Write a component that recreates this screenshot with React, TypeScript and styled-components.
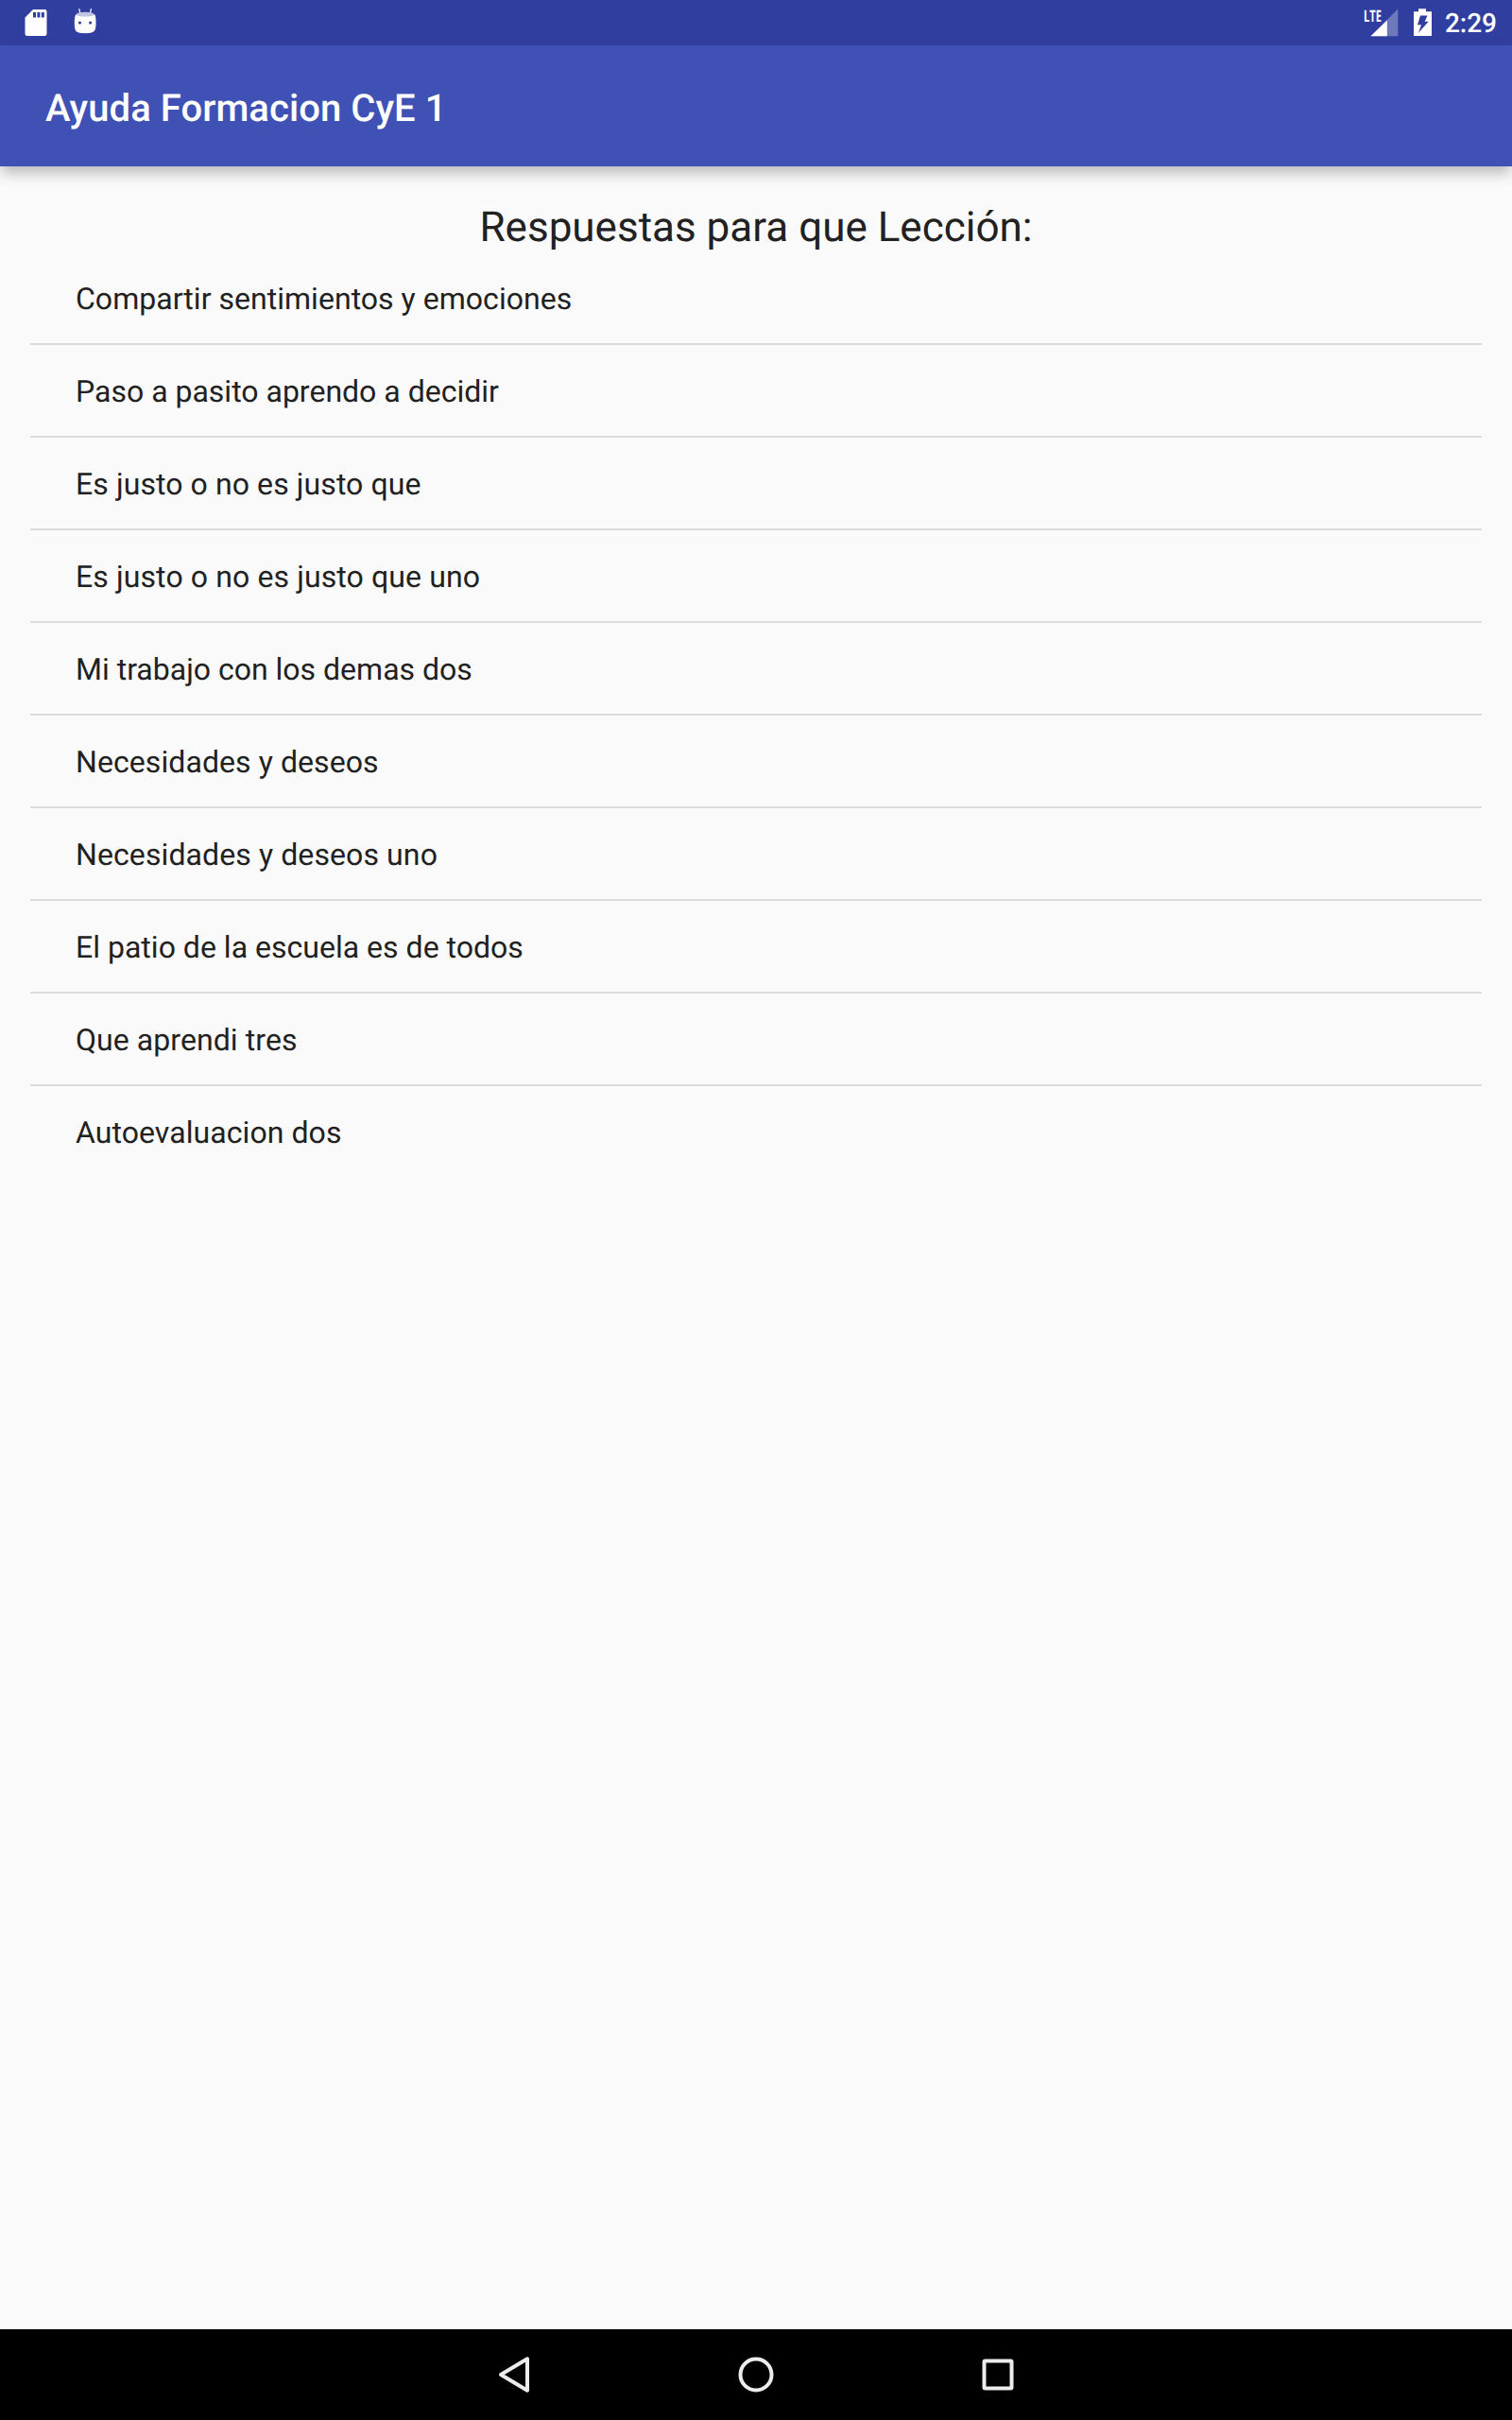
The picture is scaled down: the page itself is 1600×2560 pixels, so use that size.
import React from "react";
import styled, { createGlobalStyle } from "styled-components";

const GlobalStyle = createGlobalStyle`
  * { box-sizing: border-box; }
  body {
    margin: 0;
    background: #fafafa;
    font-family: Roboto, "Noto Sans", sans-serif;
    text-rendering: geometricPrecision;
  }
`;

const Screen = styled.div`
  display: flex;
  flex-direction: column;
  width: 1600px;
  height: 2560px;
  background: #fafafa;
  color: #212121;
  overflow: hidden;
`;

const StatusBar = styled.header`
  display: flex;
  justify-content: space-between;
  height: 48px;
  flex: none;
  background: #303f9f;
  color: #fff;
  padding: 0 16px 0 22px;
`;

const StatusGroup = styled.div<{ $gap: number }>`
  display: flex;
  align-items: center;
  gap: ${(p) => p.$gap}px;
`;

const Clock = styled.span`
  font-size: 28px;
  font-weight: 500;
  line-height: 48px;
  padding-top: 2px;
`;

const Toolbar = styled.div`
  display: flex;
  align-items: center;
  height: 128px;
  flex: none;
  padding: 5px 0 0 48px;
  background: #3f51b5;
  color: #fff;
  box-shadow: 0 8px 14px -1px rgba(0, 0, 0, 0.26);
`;

const Title = styled.h1`
  margin: 0;
  font-size: 40px;
  font-weight: 500;
  line-height: 48px;
  letter-spacing: 0.06px;
`;

const Content = styled.main`
  flex: 1;
  padding: 32px 32px 0;
`;

const Heading = styled.h2`
  margin: 0;
  height: 59px;
  font-size: 44px;
  font-weight: 400;
  line-height: 65px;
  text-align: center;
`;

const List = styled.ul`
  margin: 0;
  padding: 0;
  list-style: none;
`;

const Item = styled.li<{ $tracking: number }>`
  height: 98px;
  padding-left: 48px;
  border-bottom: 2px solid #dcdcdc;
  font-size: 32px;
  line-height: 98px;
  letter-spacing: ${(p) => p.$tracking}px;
  &:last-child { border-bottom: 0; }
`;

const NavBar = styled.nav`
  display: flex;
  justify-content: center;
  align-items: center;
  height: 96px;
  flex: none;
  background: #000;
`;

const NavButton = styled.button`
  display: flex;
  justify-content: center;
  align-items: center;
  width: 256px;
  height: 96px;
  padding: 0;
  border: 0;
  background: none;
`;

const lessons = [
  { name: "Compartir sentimientos y emociones", tracking: 0.03 },
  { name: "Paso a pasito aprendo a decidir", tracking: 0 },
  { name: "Es justo o no es justo que", tracking: 0.09 },
  { name: "Es justo o no es justo que uno", tracking: 0.11 },
  { name: "Mi trabajo con los demas dos", tracking: 0 },
  { name: "Necesidades y deseos", tracking: 0.08 },
  { name: "Necesidades y deseos uno", tracking: 0.1 },
  { name: "El patio de la escuela es de todos", tracking: 0.015 },
  { name: "Que aprendi tres", tracking: 0.07 },
  { name: "Autoevaluacion dos", tracking: 0.07 },
];

const SdCard = () => (
  <svg width="32" height="48" viewBox="22 0 32 48">
    <path fillRule="evenodd" fill="#fff" d="M35 10h12.2a2.3 2.3 0 0 1 2.3 2.3v23.4a2.3 2.3 0 0 1-2.3 2.3H28.8a2.3 2.3 0 0 1-2.3-2.3V18.5zM35 13v5.5h3V13zm4.4 0v5.5h3V13zm4.4 0v5.5h3V13z" />
  </svg>
);

const Droid = () => (
  <svg width="32" height="48" viewBox="74 0 32 48">
    <path d="M83.7 9.2l1.100 5M87.700 9.200" fill="none" />
    <path d="M83.7 9.2l1.1 5M96.5 9.2l-1.1 5" stroke="#fff" strokeWidth="1.2" />
    <path fill="#fff" d="M80 15.5h20.4c1 2.6 1.3 6 1.1 10-.2 7.5-1.5 9.7-11.5 9.7s-11-2.2-11.2-9.7c-.1-4 .2-7.4 1.2-10z" />
    <ellipse cx="90.2" cy="15.2" rx="9.5" ry="2.4" fill="#c0c5e3" />
    <circle cx="84.5" cy="24" r="1.6" fill="#303f9f" />
    <circle cx="95.6" cy="24" r="1.6" fill="#303f9f" />
  </svg>
);

const SignalBox = styled.span`
  position: relative;
  width: 38px;
  height: 48px;
`;

const NetworkType = styled.span`
  position: absolute;
  left: 0;
  top: 7px;
  font-family: "Open Sans", sans-serif;
  font-size: 17px;
  font-weight: 700;
  line-height: 20px;
  transform: scaleX(0.65);
  transform-origin: left;
`;

const Signal = () => (
  <SignalBox>
    <svg width="38" height="48" viewBox="1443 0 38 48">
      <path fill="#fff" fillOpacity=".3" d="M1479.3 9.5V38.3h-28.8z" />
      <path fill="#fff" d="M1467.8 21.500V38.3h-17.3z" />
    </svg>
    <NetworkType>LTE</NetworkType>
  </SignalBox>
);

const Battery = () => (
  <svg width="20" height="48" viewBox="1495 0 20 48">
    <path fill="#fff" d="M1501 9.3h8v3h6V38h-19V12.3h5z" />
    <path fill="#303f9f" d="M1503 16.5h7.5l-2.8 6.2h4l-10.7 12 3-8.5h-4z" />
  </svg>
);

const BackIcon = () => (
  <svg width="48" height="48" viewBox="0 0 48 48">
    <path d="M38 7.3v33.4L10 24z" fill="none" stroke="#ececec" strokeWidth="4" strokeLinejoin="round" />
  </svg>
);

const HomeIcon = () => (
  <svg width="48" height="48" viewBox="0 0 48 48">
    <circle cx="24" cy="24" r="16.5" fill="none" stroke="#ececec" strokeWidth="4" />
  </svg>
);

const RecentsIcon = () => (
  <svg width="48" height="48" viewBox="0 0 48 48">
    <rect x="9.5" y="9.5" width="29" height="29" rx="1" fill="none" stroke="#ececec" strokeWidth="4" />
  </svg>
);

export default function App() {
  return (
    <>
      <GlobalStyle />
      <Screen>
        <StatusBar>
          <StatusGroup $gap={20}>
            <SdCard />
            <Droid />
          </StatusGroup>
          <StatusGroup $gap={14}>
            <Signal />
            <Battery />
            <Clock>2:29</Clock>
          </StatusGroup>
        </StatusBar>
        <Toolbar>
          <Title>Ayuda Formacion CyE 1</Title>
        </Toolbar>
        <Content>
          <Heading>Respuestas para que Lección:</Heading>
          <List>
            {lessons.map(({ name, tracking }) => (
              <Item key={name} $tracking={tracking}>{name}</Item>
            ))}
          </List>
        </Content>
        <NavBar>
          <NavButton><BackIcon /></NavButton>
          <NavButton><HomeIcon /></NavButton>
          <NavButton><RecentsIcon /></NavButton>
        </NavBar>
      </Screen>
    </>
  );
}
